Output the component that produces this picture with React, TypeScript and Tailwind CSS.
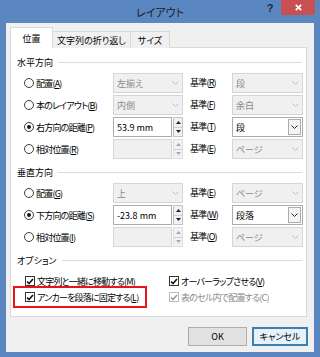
import type { ReactNode } from "react";

const font = "font-['Noto_Sans_CJK_JP',sans-serif] [font-feature-settings:'palt']";

// アクセスキー付きラベル: 配置(A) — 無効時は灰色・下線なし
function Label({ text, k, on = true }: { text: string; k: string; on?: boolean }) {
  return (
    <span className={`whitespace-nowrap leading-none tracking-[-0.8px] ${on ? "text-black" : "text-[#838383]"}`}>
      {text}(<span className={on ? "underline underline-offset-[1px]" : ""}>{k}</span>)
    </span>
  );
}

function Radio({ checked = false }: { checked?: boolean }) {
  return (
    <span className="flex h-[10px] w-[10px] shrink-0 items-center justify-center rounded-full border border-[#3c3c3c] bg-white">
      {checked && <span className="h-[4px] w-[4px] rounded-full bg-[#1a1a1a]" />}
    </span>
  );
}

function Check({ on = true }: { on?: boolean }) {
  return (
    <span
      className={`flex h-[10px] w-[10px] shrink-0 items-center justify-center border bg-white ${
        on ? "border-[#333]" : "border-[#bcbcbc]"
      }`}
    >
      <svg width="8" height="7" viewBox="0 0 8 7">
        <path d="M1 3.5 L3 5.5 L7 1" fill="none" stroke={on ? "#111" : "#9a9a9a"} strokeWidth="1.6" />
      </svg>
    </span>
  );
}

function Chevron({ on }: { on: boolean }) {
  return (
    <svg width="7" height="4" viewBox="0 0 7 4">
      <path d="M0.5 0.5 L3.5 3.5 L6.5 0.5" fill="none" stroke={on ? "#222" : "#bdbdbd"} strokeWidth="1" />
    </svg>
  );
}

function Combo({ value, on = false, w }: { value: string; on?: boolean; w: string }) {
  return (
    <div
      className={`flex h-[20px] ${w} items-center border ${
        on ? "border-[#acacac] bg-white text-black" : "border-[#d5d5d5] bg-[#f0f0f0] text-[#8a8a8a]"
      }`}
    >
      <span className="flex-1 whitespace-nowrap pl-[3px] leading-none">{value}</span>
      <span
        className={`flex w-[13px] items-center justify-center ${
          on ? "m-[1px] h-[16px] border border-[#acacac] bg-[#f4f4f4]" : "h-full"
        }`}
      >
        <Chevron on={on} />
      </span>
    </div>
  );
}

function Spin({ value, on = false }: { value: string; on?: boolean }) {
  const arrow = on ? "#222" : "#a8a8a8";
  return (
    <div className="flex h-[20px] w-[70px] items-center">
      <div
        className={`flex h-full flex-1 items-center border pl-[3px] leading-none ${
          on ? "border-[#abadb3] bg-white text-black" : "border-[#d5d5d5] bg-[#f0f0f0]"
        }`}
      >
        {value}
      </div>
      <div className={`ml-[1px] flex h-full w-[10px] flex-col border ${on ? "border-[#c2c2c2]" : "border-[#dedede]"} bg-[#f2f2f2]`}>
        <span className="flex flex-1 items-center justify-center border-b border-[#d0d0d0]">
          <svg width="5" height="3" viewBox="0 0 5 3">
            <path d="M0 3 L2.5 0 L5 3 Z" fill={arrow} />
          </svg>
        </span>
        <span className="flex flex-1 items-center justify-center">
          <svg width="5" height="3" viewBox="0 0 5 3">
            <path d="M0 0 L2.5 3 L5 0 Z" fill={arrow} />
          </svg>
        </span>
      </div>
    </div>
  );
}

type Row = {
  label: string;
  k: string;
  checked?: boolean;
  field: ReactNode;
  bk: string;
  base: string;
  on?: boolean;
};

function PosRow({ r }: { r: Row }) {
  return (
    <div className="flex h-[22px] items-center pl-[13px]">
      <div className="flex w-[89px] items-center gap-[2px]">
        <Radio checked={r.checked} />
        <Label text={r.label} k={r.k} />
      </div>
      {r.field}
      <div className="ml-[7px] w-[42px]">
        <Label text="基準" k={r.bk} on={r.on} />
      </div>
      <Combo value={r.base} on={r.on} w="w-[71px]" />
    </div>
  );
}

function Heading({ children }: { children: string }) {
  return (
    <div className="flex h-[16px] items-center gap-[5px] pl-[6px] pr-[4px]">
      <span className="leading-none text-black">{children}</span>
      <span className="h-px flex-1 bg-[#dcdcdc]" />
    </div>
  );
}

const horizontal: Row[] = [
  { label: "配置", k: "A", field: <Combo value="左揃え" w="w-[70px]" />, bk: "R", base: "段" },
  { label: "本のレイアウト", k: "B", field: <Combo value="内側" w="w-[70px]" />, bk: "F", base: "余白" },
  { label: "右方向の距離", k: "P", checked: true, field: <Spin value="53.9 mm" on />, bk: "T", base: "段", on: true },
  { label: "相対位置", k: "R", field: <Spin value="" />, bk: "E", base: "ページ" },
];

const vertical: Row[] = [
  { label: "配置", k: "G", field: <Combo value="上" w="w-[70px]" />, bk: "E", base: "ページ" },
  { label: "下方向の距離", k: "S", checked: true, field: <Spin value="-23.8 mm" on />, bk: "W", base: "段落", on: true },
  { label: "相対位置", k: "I", field: <Spin value="" />, bk: "O", base: "ページ" },
];

export default function App() {
  return (
    <div className={`flex h-[357px] w-[320px] flex-col bg-[#5b87c1] text-[9px] ${font}`}>
      {/* タイトルバー */}
      <div className="grid h-[23px] shrink-0 grid-cols-[1fr_auto_1fr] items-start">
        <span />
        <span className="pt-[7px] text-[11px] leading-none text-[#1e1e1e]">レイアウト</span>
        <div className="flex justify-end">
          <span className="mr-[4px] flex h-[16px] w-[14px] items-center justify-center font-['Liberation_Sans',sans-serif] text-[11px] font-bold text-[#1f2a3a]">
            ?
          </span>
          <span className="mr-[5px] flex h-[15px] w-[34px] items-center justify-center bg-[#c75050]">
            <svg width="7" height="7" viewBox="0 0 7 7">
              <path d="M0.8 0.8 L6.2 6.2 M6.2 0.8 L0.8 6.2" stroke="#fff" strokeWidth="1.8" />
            </svg>
          </span>
        </div>
      </div>

      {/* クライアント領域 */}
      <div className="mb-[5px] ml-[6px] flex w-[308px] flex-1 flex-col bg-[#f0f0f0] pl-[4px] pt-[4px]">
        <div className="relative z-10 -mb-px flex h-[21px] items-end">
          <span className="flex h-[21px] w-[43px] items-center justify-center border border-b-0 border-[#d9d9d9] bg-white leading-none text-black">
            位置
          </span>
          <span className="flex h-[17px] w-[78px] items-center justify-center border border-l-0 border-b-0 border-[#d9d9d9] bg-[#f0f0f0] leading-none text-black">
            文字列の折り返し
          </span>
          <span className="flex h-[17px] w-[39px] items-center justify-center border border-l-0 border-b-0 border-[#d9d9d9] bg-[#f0f0f0] leading-none text-black">
            サイズ
          </span>
        </div>

        <div className="flex h-[270px] w-[297px] flex-col border border-[#d9d9d9] bg-white">
          <div className="mt-[6px]">
            <Heading>水平方向</Heading>
          </div>
          <div className="mt-[2px]">
            {horizontal.map((r) => (
              <PosRow key={r.label + r.k} r={r} />
            ))}
          </div>
          <div className="mt-[4px]">
            <Heading>垂直方向</Heading>
          </div>
          <div className="mt-[2px]">
            {vertical.map((r) => (
              <PosRow key={r.label + r.k} r={r} />
            ))}
          </div>
          <div className="mt-[4px]">
            <Heading>オプション</Heading>
          </div>
          <div className="mt-[5px] flex flex-col">
            <div className="flex h-[16px] items-center">
              <div className="flex w-[158px] items-center gap-[2px] pl-[14px]">
                <Check />
                <Label text="文字列と一緒に移動する" k="M" />
              </div>
              <div className="flex items-center gap-[2px]">
                <Check />
                <Label text="オーバーラップさせる" k="V" />
              </div>
            </div>
            <div className="relative flex h-[16px] items-center">
              {/* 注釈の赤枠 */}
              <span className="absolute left-[2px] top-[-3px] h-[22px] w-[134px] border-2 border-[#e8141b]" />
              <div className="flex w-[158px] items-center gap-[2px] pl-[14px]">
                <Check />
                <Label text="アンカーを段落に固定する" k="L" />
              </div>
              <div className="flex items-center gap-[2px]">
                <Check on={false} />
                <span className="whitespace-nowrap leading-none tracking-[-0.8px] text-[#8a8a8a]">表のセル内で配置する(C)</span>
              </div>
            </div>
          </div>
        </div>

        <div className="mt-[10px] flex justify-end gap-[5px] pr-[6px]">
          <button className="flex h-[19px] w-[59px] items-center justify-center border border-[#adadad] bg-[#e1e1e1] leading-none text-black">
            OK
          </button>
          <button className="flex h-[19px] w-[56px] items-center justify-center border border-[#3c7fb1] bg-[#e5f1fb] leading-none text-black shadow-[inset_0_0_0_1px_#3c7fb1]">
            キャンセル
          </button>
        </div>
      </div>
    </div>
  );
}
